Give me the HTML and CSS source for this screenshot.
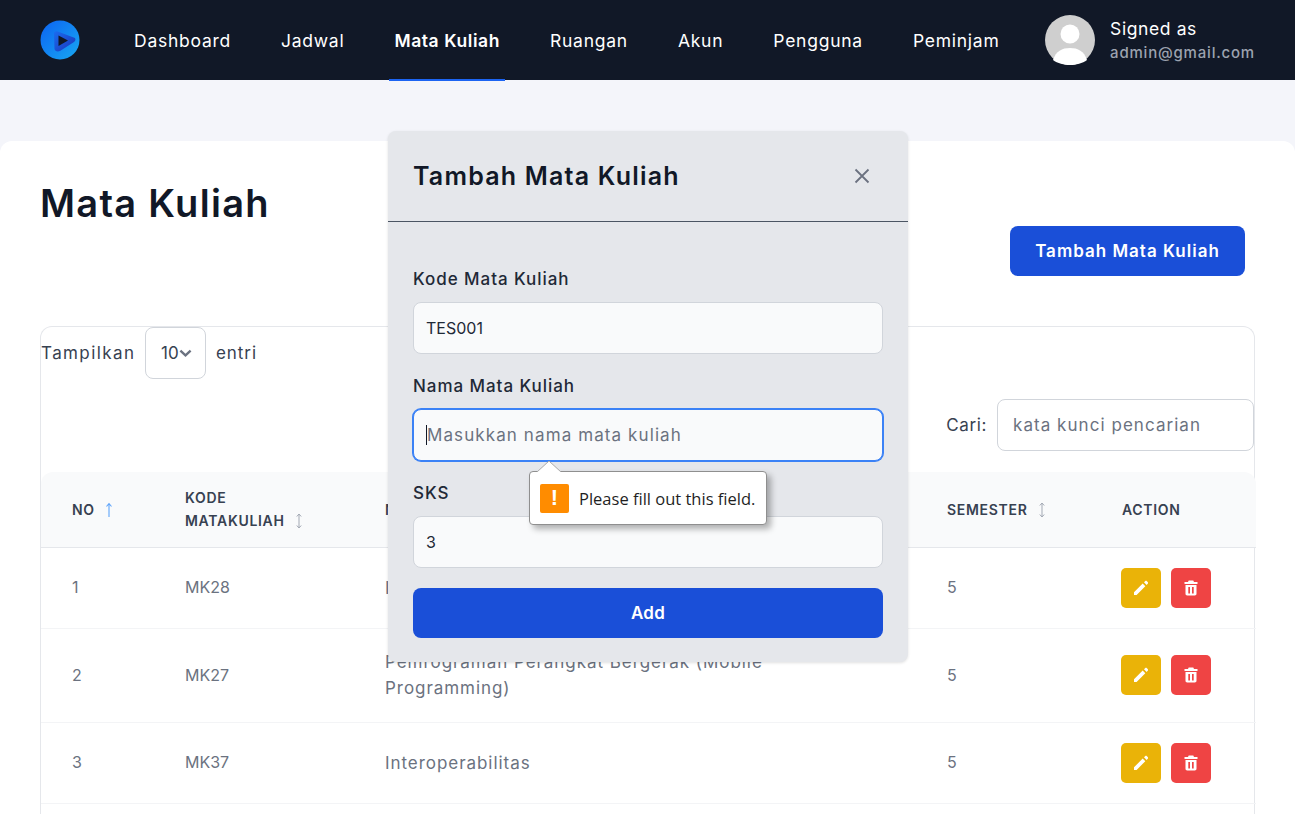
FILE: index.html
```html
<!DOCTYPE html>
<html lang="id">
<head>
<meta charset="utf-8">
<title>Mata Kuliah</title>
<link rel="stylesheet" href="styles.css">
</head>
<body>
<svg class="defs" width="0" height="0" aria-hidden="true">
  <symbol id="i-edit" viewBox="0 0 16 16"><path d="M1 12.300 L9.700 3.600 L12.300 6.200 L3.600 15 L1 15 Z M11 2.300 L12.100 1.200 C12.600 .700 13.400 .700 13.900 1.200 L14.700 2 C15.200 2.500 15.200 3.300 14.700 3.800 L13.600 4.900 Z" fill="#fff"/></symbol>
  <symbol id="i-del" viewBox="0 0 16 16"><path d="M5.700 .500 L10.300 .500 L11 2 L14.500 2 L14.500 4 L1.500 4 L1.500 2 L5 2 Z M2.500 5 L13.500 5 L13.500 13.800 C13.500 14.900 12.800 15.500 11.800 15.500 L4.200 15.500 C3.200 15.500 2.500 14.900 2.500 13.800 Z M5.300 7 L5.300 13.500 L7 13.500 L7 7 Z M9 7 L9 13.500 L10.700 13.500 L10.700 7 Z" fill="#fff" fill-rule="evenodd"/></symbol>
  <symbol id="i-sort" viewBox="0 0 8 16"><path d="M4 1 L4 15 M1.800 3.500 L4 1 L6.200 3.500 M1.800 12.500 L4 15 L6.200 12.500" fill="none" stroke="currentColor" stroke-width="1"/></symbol>
  <symbol id="i-up" viewBox="0 0 8 16"><path d="M4 1.500 L4 15 M1.500 4.500 L4 1.500 L6.500 4.500" fill="none" stroke="currentColor" stroke-width="1.100"/></symbol>
</svg>
<header class="topbar">
  <svg class="logo" viewBox="0 0 40 40" width="40" height="40" aria-hidden="true">
    <defs>
      <linearGradient id="lg1" x1="0" y1="0" x2="1" y2="1"><stop offset="0" stop-color="#0c63f2"/><stop offset="1" stop-color="#18a8f2"/></linearGradient>
      <linearGradient id="lg2" x1="0" y1="0" x2="1" y2="1"><stop offset="0" stop-color="#1a6cf0"/><stop offset="1" stop-color="#1c35b8"/></linearGradient>
    </defs>
    <circle cx="20" cy="20" r="19.500" fill="url(#lg1)"/>
    <path d="M14 13 C15 11 17 11 19 12 L35 18 C36 20 35 21 34 22 L20 31 C17 32 15 31 14.500 29 Z" fill="url(#lg2)"/>
    <path d="M18.500 15.500 L28 20.500 L18.500 26 Z" fill="#111827"/>
  </svg>
  <nav class="nav">
    <a class="nav-link">Dashboard</a>
    <a class="nav-link">Jadwal</a>
    <a class="nav-link active">Mata Kuliah</a>
    <a class="nav-link">Ruangan</a>
    <a class="nav-link">Akun</a>
    <a class="nav-link">Pengguna</a>
    <a class="nav-link">Peminjam</a>
  </nav>
  <div class="user">
    <svg class="avatar" viewBox="0 0 50 50" width="50" height="50" aria-hidden="true">
      <circle cx="25" cy="25" r="25" fill="#cfcfcf"/>
      <circle cx="25" cy="19" r="9.500" fill="#fff"/>
      <path d="M8 45 C11 36 17 33 25 33 C33 33 39 36 42 45 C37.500 48.500 31 50 25 50 C19 50 12.500 48.500 8 45 Z" fill="#fff"/>
    </svg>
    <div class="user-text">
      <div class="signed">Signed as</div>
      <div class="mail">admin@gmail.com</div>
    </div>
  </div>
</header>

<main class="page">
  <section class="card">
    <div class="card-head">
      <h1 class="title">Mata Kuliah</h1>
      <button class="btn-primary">Tambah Mata Kuliah</button>
    </div>
    <div class="table-box">
      <div class="length">
        <span class="len-label">Tampilkan</span>
        <span class="select">10<svg viewBox="0 0 14 8" width="13" height="8" aria-hidden="true"><path d="M1.500 1.500 L7 6.500 L12.500 1.500" fill="none" stroke="#6b7280" stroke-width="2.600"/></svg></span>
        <span>entri</span>
      </div>
      <div class="search">
        <span>Cari:</span>
        <span class="search-input">kata kunci pencarian</span>
      </div>
      <table class="table">
        <thead>
          <tr>
            <th class="c-no">NO <svg class="sort on" width="8" height="16" aria-hidden="true"><use href="#i-up"/></svg></th>
            <th class="c-code">KODE MATAKULIAH <svg class="sort" width="8" height="16" aria-hidden="true"><use href="#i-sort"/></svg></th>
            <th class="c-name">NAMA MATAKULIAH</th>
            <th class="c-sem">SEMESTER <svg class="sort" width="8" height="16" aria-hidden="true"><use href="#i-sort"/></svg></th>
            <th class="c-act">ACTION</th>
          </tr>
        </thead>
        <tbody>
          <tr class="r1">
            <td>1</td><td>MK28</td><td class="name-cell">Internet of Things</td><td>5</td>
            <td><div class="acts">
              <span class="act edit"><svg width="16" height="16" aria-hidden="true"><use href="#i-edit"/></svg></span>
              <span class="act del"><svg width="16" height="16" aria-hidden="true"><use href="#i-del"/></svg></span>
            </div></td>
          </tr>
          <tr class="r2">
            <td>2</td><td>MK27</td><td class="name-cell">Pemrograman Perangkat Bergerak (Mobile Programming)</td><td>5</td>
            <td><div class="acts">
              <span class="act edit"><svg width="16" height="16" aria-hidden="true"><use href="#i-edit"/></svg></span>
              <span class="act del"><svg width="16" height="16" aria-hidden="true"><use href="#i-del"/></svg></span>
            </div></td>
          </tr>
          <tr class="r3">
            <td>3</td><td>MK37</td><td class="name-cell">Interoperabilitas</td><td>5</td>
            <td><div class="acts">
              <span class="act edit"><svg width="16" height="16" aria-hidden="true"><use href="#i-edit"/></svg></span>
              <span class="act del"><svg width="16" height="16" aria-hidden="true"><use href="#i-del"/></svg></span>
            </div></td>
          </tr>
        </tbody>
      </table>
    </div>
  </section>
</main>

<div class="modal">
  <div class="modal-head">
    <h2 class="modal-title">Tambah Mata Kuliah</h2>
    <svg class="close" viewBox="0 0 16 16" width="16" height="16" aria-hidden="true"><path d="M1.500 1.500 L14.500 14.500 M14.500 1.500 L1.500 14.500" stroke="#6b7280" stroke-width="1.800" fill="none"/></svg>
  </div>
  <div class="modal-body">
    <div class="field">
      <label class="label">Kode Mata Kuliah</label>
      <div class="input">TES001</div>
    </div>
    <div class="field">
      <label class="label">Nama Mata Kuliah</label>
      <div class="input focus"><span class="caret"></span><span class="ph">Masukkan nama mata kuliah</span></div>
    </div>
    <div class="field">
      <label class="label">SKS</label>
      <div class="input">3</div>
    </div>
    <button class="btn-add">Add</button>
  </div>
</div>

<div class="tip">
  <svg class="tip-arrow" viewBox="0 0 24 11" width="24" height="11" aria-hidden="true"><path d="M0 11 L12 0 L24 11" fill="#fff" stroke="#a9a9a9" stroke-width="1"/></svg>
  <span class="tip-icon">!</span>
  <span class="tip-text">Please fill out this field.</span>
</div>
</body>
</html>
```

FILE: styles.css
```css
* { box-sizing: border-box; }
html, body { margin: 0; height: 814px; overflow: hidden; }
body {
  background: #f4f5fa;
  font-family: "Inter", "Liberation Sans", sans-serif;
  color: #111827;
  position: relative;
}
.defs { position: absolute; }
.topbar {
  height: 80px;
  background: #111827;
  display: flex;
  align-items: center;
  padding: 0 40px;
}
.logo { flex: none; }
.nav { display: flex; margin-left: 49px; gap: 40px; height: 80px; }
.nav-link {
  color: #fff;
  font-size: 17.500px;
  letter-spacing: .75px;
  padding: 2px 5px 0;
  display: flex;
  align-items: center;
  height: 81px;
  border-bottom: 2px solid transparent;
  position: relative;
  z-index: 2;
  white-space: nowrap;
}
.nav-link.active { font-weight: 600; letter-spacing: .57px; border-bottom-color: #1c64f2; }
.user { margin-left: auto; display: flex; align-items: center; gap: 15px; }
.avatar { display: block; }
.user-text { margin-top: 1px; }
.signed { color: #fff; font-size: 17.500px; letter-spacing: .6px; line-height: 24px; margin-bottom: 1px; }
.mail { color: #9ca3af; font-size: 15px; letter-spacing: .8px; line-height: 22px; font-weight: 500; }

.page { padding-top: 61px; }
.card {
  background: #fff;
  border-radius: 12px 12px 0 0;
  padding: 40px;
  height: 680px;
}
.card-head { display: flex; justify-content: space-between; align-items: flex-start; height: 145px; padding-right: 10px; }
.title { margin: 0; font-size: 38px; letter-spacing: 1.300px; line-height: 44px; font-weight: 600; color: #111827; }
.btn-primary {
  margin-top: 45px;
  height: 50px;
  width: 235px;
  border: 0;
  border-radius: 8px;
  background: #1a4fd8;
  color: #fff;
  font: 600 17px "Inter", sans-serif;
  letter-spacing: 1px;
}
.table-box {
  width: 1215px;
  border: 1px solid #e5e7eb;
  border-bottom: 0;
  border-radius: 12px 12px 0 0;
  height: 500px;
}
.length { display: flex; align-items: center; gap: 10px; font-size: 17px; letter-spacing: .95px; color: #374151; height: 52px; }
.len-label { width: 94px; white-space: nowrap; letter-spacing: 1.400px; }
.select {
  width: 61px;
  height: 52px;
  border: 1px solid #d1d5db;
  border-radius: 8px;
  display: flex;
  align-items: center;
  padding-left: 15px;
  color: #374151;
  letter-spacing: 0;
}
.search { display: flex; justify-content: flex-end; align-items: center; gap: 10px; font-size: 17px; letter-spacing: .6px; color: #374151; margin-top: 20px; height: 52px; }
.search-input {
  width: 257px;
  height: 52px;
  border: 1px solid #d1d5db;
  border-radius: 8px;
  display: flex;
  align-items: center;
  padding-left: 15px;
  color: #6b7280;
  letter-spacing: 1.050px;
}
.table { border-collapse: collapse; width: 1215px; table-layout: fixed; margin-top: 21px; font-size: 16px; color: #6b7280; }
.table th {
  background: #f9fafb;
  color: #374151;
  font-size: 14px;
  font-weight: 600;
  letter-spacing: .7px;
  line-height: 23px;
  text-align: left;
  padding: 0 0 0 31px;
  height: 75px;
  border-bottom: 1px solid #e5e7eb;
}
.table th:first-child { border-top-left-radius: 12px; }
.table th:last-child { border-top-right-radius: 12px; }
.table td { padding: 0 0 0 31px; border-bottom: 1px solid #f3f4f6; line-height: 25px; }
.table th.c-code { padding-right: 39px; }
.table .name-cell { font-size: 17px; letter-spacing: .95px; line-height: 26px; padding-right: 125px; }
.c-no { width: 113px; }
.c-code { width: 200px; }
.c-name { width: 562px; }
.c-sem { width: 175px; }
.r1 td { height: 81px; }
.r2 td { height: 94px; }
.r3 td { height: 81px; }
.sort { color: #a3a9b4; margin-left: 6px; vertical-align: -3px; }
.sort.on { color: #60a5fa; }
.acts { display: flex; gap: 10px; margin-left: -1px; }
.act { width: 40px; height: 40px; border-radius: 5px; display: flex; align-items: center; justify-content: center; }
.edit { background: #eab308; }
.del { background: #ef4444; }

.modal {
  position: absolute;
  left: 388px;
  top: 131px;
  width: 520px;
  height: 531px;
  background: #e5e7eb;
  border-radius: 8px;
  box-shadow: 0 1px 3px rgba(0,0,0,.12);
  z-index: 5;
}
.modal-head {
  height: 91px;
  border-bottom: 1px solid #4b5563;
  display: flex;
  align-items: center;
  justify-content: space-between;
  padding: 0 38px 0 25px;
}
.modal-title { margin: 0; font-size: 25px; letter-spacing: 1.200px; font-weight: 600; color: #111827; }
.modal-body { padding: 45px 25px 0; }
.field { margin-bottom: 20px; }
.label { display: block; font-size: 17px; letter-spacing: .95px; font-weight: 500; color: #1f2937; line-height: 24px; margin-bottom: 11px; }
.input {
  height: 52px;
  border: 1px solid #d1d5db;
  border-radius: 8px;
  background: #f9fafb;
  display: flex;
  align-items: center;
  padding-left: 12px;
  font-size: 16px;
  color: #1f2937;
}
.input.focus { border-color: #3b82f6; box-shadow: 0 0 0 1px #3b82f6; }
.caret { width: 1px; height: 20px; background: #111827; margin-right: 0; }
.ph { color: #6b7280; font-size: 17px; letter-spacing: 1.100px; }
.btn-add {
  display: block;
  width: 100%;
  height: 50px;
  border: 0;
  border-radius: 8px;
  background: #1a4fd8;
  color: #fff;
  font: 600 17px "Inter", sans-serif;
  letter-spacing: .3px;
}

.tip {
  position: absolute;
  left: 529px;
  top: 471px;
  width: 238px;
  height: 54px;
  background: #fff;
  border: 1px solid #8f8f8f;
  border-radius: 4px;
  box-shadow: 4px 4px 6px rgba(0,0,0,.3);
  display: flex;
  align-items: center;
  padding-left: 10px;
  gap: 10px;
  z-index: 6;
}
.tip-arrow { position: absolute; left: 7px; top: -11px; }
.tip-icon {
  width: 29px;
  height: 29px;
  background: #ff8c00;
  border-radius: 2px;
  color: #fff;
  font: 700 22px "Liberation Sans", sans-serif;
  display: flex;
  align-items: center;
  justify-content: center;
}
.tip-text { font-family: "Open Sans", sans-serif; font-size: 16.500px; color: #1f1f1f; white-space: nowrap; }
```
